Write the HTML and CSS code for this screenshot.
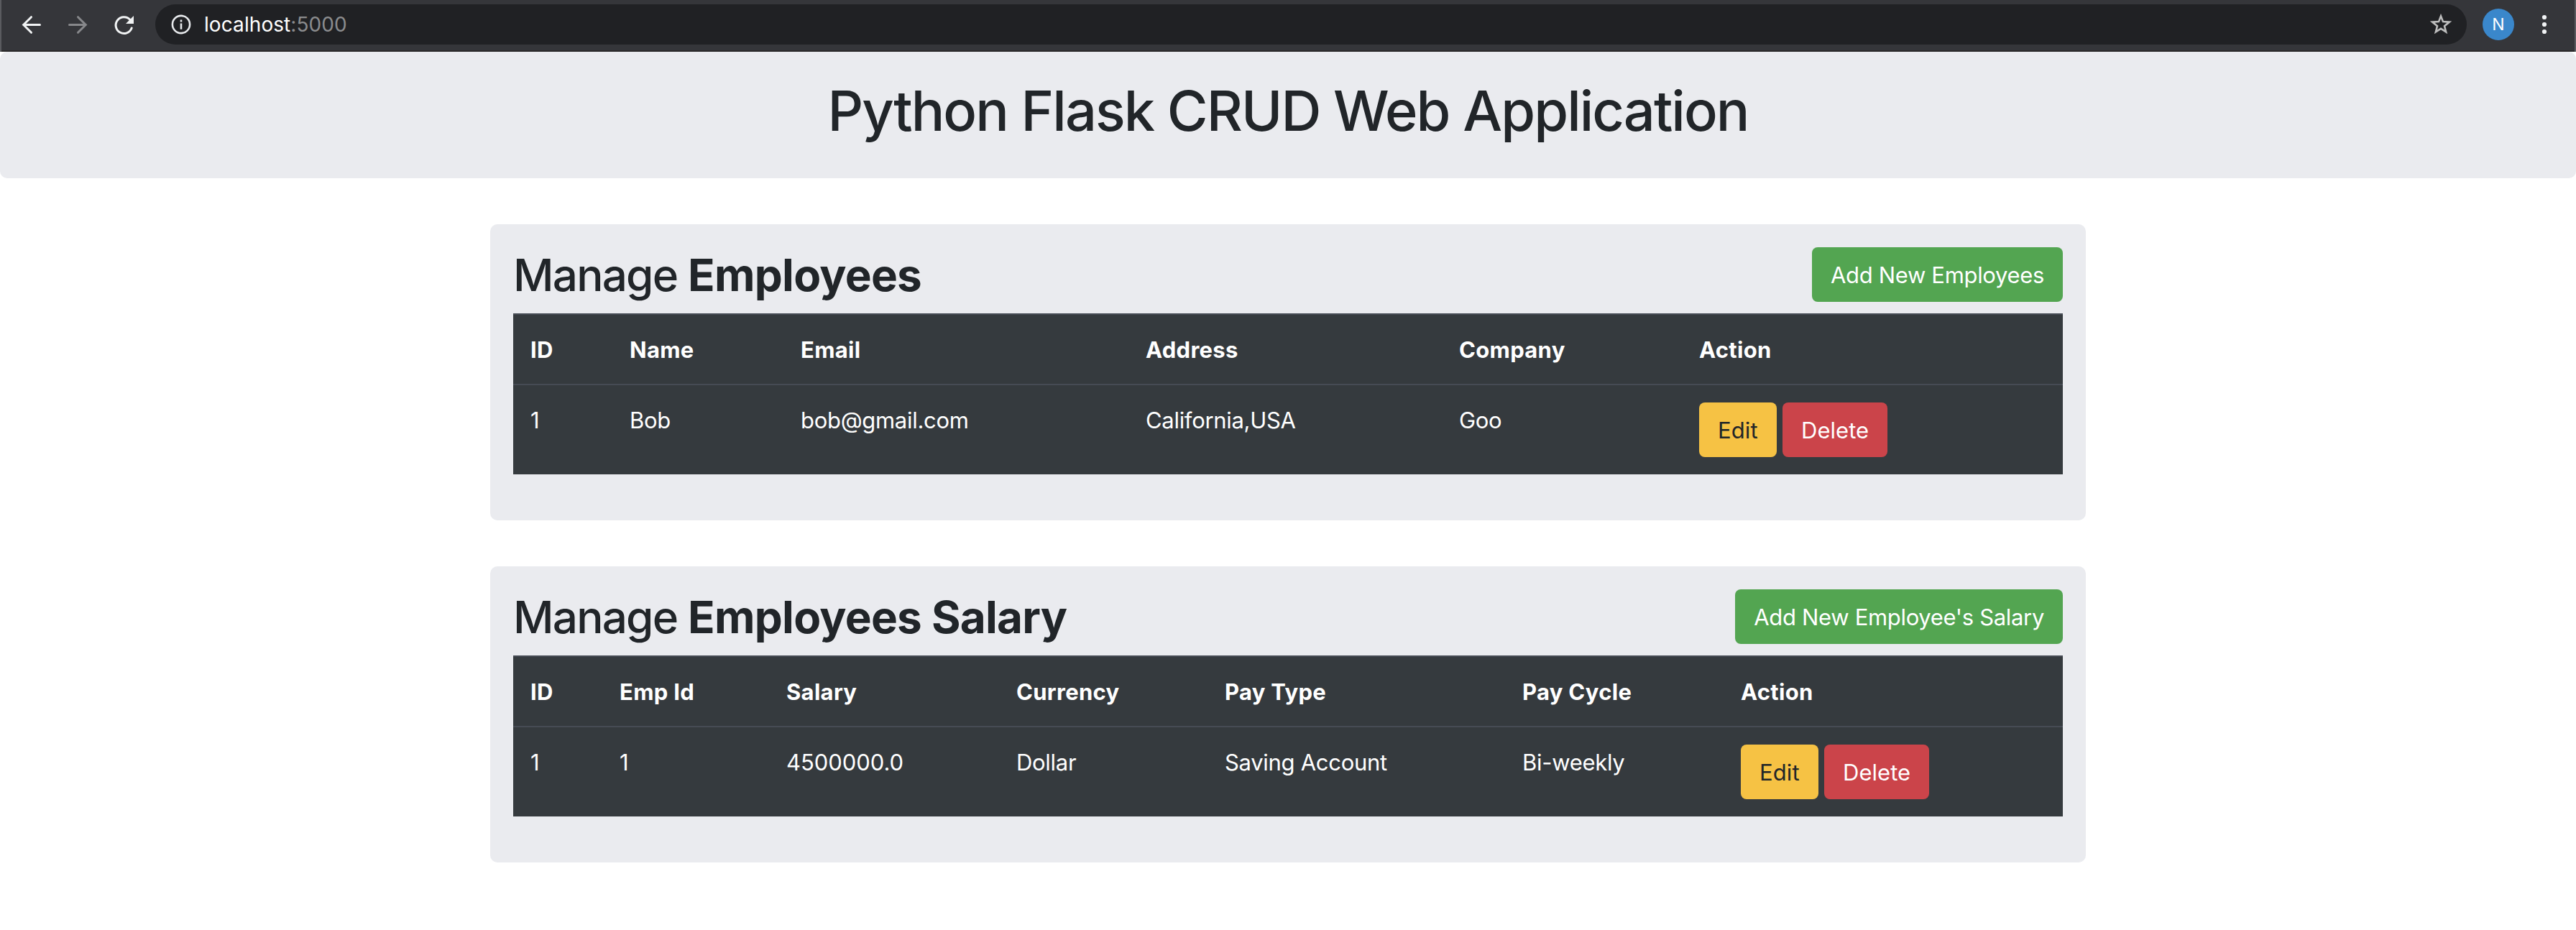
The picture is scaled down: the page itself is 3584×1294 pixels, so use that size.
FILE: index.html
```
<!DOCTYPE html>
<html lang="en">
<head>
<meta charset="utf-8">
<title>Python Flask CRUD Web Application</title>
<link rel="stylesheet" href="styles.css">
</head>
<body>
<div class="toolbar">
  <div class="nav">
    <svg class="icon" width="32" height="32" viewBox="0 0 32 32"><path d="M27.500 15.500H5M15.500 4.700 4.700 15.500l10.800 10.800"/></svg>
    <svg class="icon icon-off" width="32" height="32" viewBox="0 0 32 32"><path d="M4.500 15.500H27M16.500 4.700l10.800 10.800-10.800 10.800"/></svg>
    <svg class="icon" width="32" height="32" viewBox="0 0 32 32"><path d="M27.200 20A11.400 11.400 0 1 1 25 8.500"/><path class="solid" d="M30 3V14H19z"/></svg>
  </div>
  <div class="omnibox">
    <svg class="info" width="28" height="28" viewBox="0 0 28 28"><circle cx="14" cy="14" r="12.100"/><path d="M14 12.500v8.200M14 7.400v3"/></svg>
    <span class="url">localhost<span class="port">:5000</span></span>
    <svg class="star" width="30" height="30" viewBox="0 0 30 30"><path d="M15 3.400l3 7.700 8.700.6-6.700 5.500 2.100 8.200-7.100-4.500-7.100 4.500 2.100-8.200-6.700-5.500 8.700-.6z"/></svg>
  </div>
  <div class="avatar">N</div>
  <svg class="menu" width="8" height="28" viewBox="0 0 8 28"><circle cx="4" cy="4" r="3.100"/><circle cx="4" cy="14" r="3.100"/><circle cx="4" cy="24" r="3.100"/></svg>
</div>

<header class="jumbotron">
  <h1>Python Flask CRUD Web Application</h1>
</header>

<main class="container">
  <section class="card">
    <div class="card-head">
      <h2>Manage <b>Employees</b></h2>
      <a class="btn btn-success">Add New Employees</a>
    </div>
    <table class="table">
      <colgroup><col class="e-id"><col class="e-name"><col class="e-email"><col class="e-address"><col class="e-company"><col></colgroup>
      <thead>
        <tr><th>ID</th><th>Name</th><th>Email</th><th>Address</th><th>Company</th><th>Action</th></tr>
      </thead>
      <tbody>
        <tr><td>1</td><td>Bob</td><td>bob@gmail.com</td><td>California,USA</td><td>Goo</td>
          <td class="action-cell"><div class="actions"><a class="btn btn-warning">Edit</a><a class="btn btn-danger">Delete</a></div></td></tr>
      </tbody>
    </table>
  </section>

  <section class="card">
    <div class="card-head">
      <h2>Manage <b>Employees Salary</b></h2>
      <a class="btn btn-success">Add New Employee's Salary</a>
    </div>
    <table class="table">
      <colgroup><col class="s-id"><col class="s-emp"><col class="s-salary"><col class="s-currency"><col class="s-type"><col class="s-cycle"><col></colgroup>
      <thead>
        <tr><th>ID</th><th>Emp Id</th><th>Salary</th><th>Currency</th><th>Pay Type</th><th>Pay Cycle</th><th>Action</th></tr>
      </thead>
      <tbody>
        <tr><td>1</td><td>1</td><td class="amount">4500000.0</td><td>Dollar</td><td>Saving Account</td><td>Bi-weekly</td>
          <td class="action-cell"><div class="actions"><a class="btn btn-warning">Edit</a><a class="btn btn-danger">Delete</a></div></td></tr>
      </tbody>
    </table>
  </section>
</main>
</body>
</html>
```

FILE: styles.css
```
* { box-sizing: border-box; }

body {
  margin: 0;
  background: #fff;
  color: #212529;
  font-family: Inter, "Liberation Sans", sans-serif;
  font-size: 31px;
  line-height: 48px;
}

/* Browser toolbar */
.toolbar {
  display: flex;
  align-items: center;
  height: 72px;
  padding: 0 38px 2px 26px;
  background: #35363a;
  border: solid #5a5b5f;
  border-width: 0 2px;
  box-shadow: inset 0 -2px #292728;
}
.nav { display: flex; gap: 32px; width: 188px; }
.icon { fill: none; stroke: #f1f3f4; stroke-width: 3; stroke-linecap: round; }
.icon-off { stroke: #87888b; }
.solid { fill: #f1f3f4; stroke: none; }
.omnibox {
  flex: 1;
  display: flex;
  align-items: center;
  height: 56px;
  padding: 0 21px 0 22px;
  margin-bottom: 2px;
  border-radius: 28px;
  background: #202124;
}
.info { fill: none; stroke: #e8eaed; stroke-width: 2.600; }
.url {
  flex: 1;
  margin-left: 18px;
  font-size: 28px;
  line-height: 56px;
  letter-spacing: .08px;
  color: #fff;
}
.port { color: #8b8c8e; }
.star { fill: none; stroke: #bdbdbd; stroke-width: 2.600; }
.avatar {
  width: 44px;
  height: 44px;
  margin: 0 38px 2px 22px;
  border-radius: 50%;
  background: #3a87cb;
  color: #fff;
  font-size: 23px;
  line-height: 44px;
  text-align: center;
}
.menu { fill: #f1f3f4; margin-bottom: 2px; }

/* Page */
.jumbotron {
  height: 176px;
  padding: 32px;
  margin-bottom: 64px;
  border-radius: 10px;
  background: #eaebef;
}
h1, h2 { margin: 0; font-weight: 500; }
h1 {
  padding-top: 1px;
  font-size: 77.5px;
  line-height: 98px;
  letter-spacing: -1.95px;
  text-align: center;
}
.container { width: 2220px; margin: 0 auto; }
.card {
  height: 412px;
  padding: 32px;
  margin-bottom: 64px;
  border-radius: 10px;
  background: #eaebef;
}
.card-head {
  display: flex;
  justify-content: space-between;
  align-items: flex-start;
  height: 92px;
}
h2 { font-size: 62px; line-height: 78px; letter-spacing: -1.8px; }
h2 b { font-weight: 700; letter-spacing: -.76px; }

.btn {
  display: block;
  height: 76px;
  padding: 1px 26px 0;
  border-radius: 8px;
  line-height: 76px;
  letter-spacing: -.33px;
  white-space: nowrap;
}
.btn-success { background: #53a551; color: #fff; }
.btn-warning { background: #f6c244; color: #212529; letter-spacing: .1px; }
.btn-danger { background: #cb444a; color: #fff; letter-spacing: .05px; }
.actions { display: flex; gap: 8px; }
.actions .btn-warning { width: 108px; }

.table {
  width: 2156px;
  table-layout: fixed;
  border-spacing: 0;
  background: #353a3e;
  color: #fff;
}
th, td {
  padding: 25px 24px 23px;
  border-top: 2px solid #464b54;
  text-align: left;
  vertical-align: top;
}
th { height: 98px; font-weight: 700; letter-spacing: .3px; }
td { height: 126px; letter-spacing: -.3px; }
.action-cell { padding: 24px; }
.amount { letter-spacing: -.05px; }

.e-id { width: 138px; }
.e-name { width: 238px; }
.e-email { width: 480px; }
.e-address { width: 436px; }
.e-company { width: 334px; }

.s-id { width: 124px; }
.s-emp { width: 232px; }
.s-salary { width: 320px; }
.s-currency { width: 290px; }
.s-type { width: 414px; }
.s-cycle { width: 304px; }
```
